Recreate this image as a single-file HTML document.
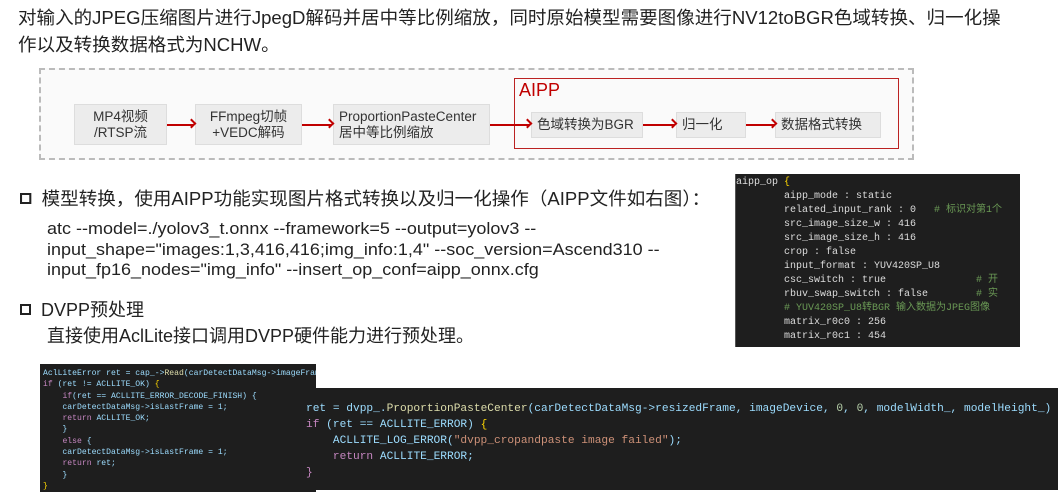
<!DOCTYPE html>
<html><head><meta charset="utf-8"><style>
body{margin:0;width:1058px;height:498px;background:#fff;position:relative;overflow:hidden;font-family:"Liberation Sans","Noto Sans CJK SC",sans-serif;color:#222}
.a{position:absolute;white-space:nowrap}
.box{position:absolute;background:#ececec;border:1px solid #ddd;font-size:13.5px;line-height:16px;color:#333;display:flex;align-items:center;box-sizing:border-box}
.arr{position:absolute;height:2px;background:#c00000}
.arr:after{content:"";position:absolute;right:-1px;top:-4px;width:7px;height:7px;border-top:2px solid #c00000;border-right:2px solid #c00000;transform:rotate(45deg);box-sizing:border-box}
.code{position:absolute;background:#1e1e1e;font-family:"Liberation Mono","Noto Sans CJK SC",monospace;white-space:pre;color:#9cdcfe}
.chk{display:inline-block;width:11px;height:11px;border:2px solid #222;box-sizing:border-box;margin-right:10px;vertical-align:1px}
</style></head><body>
<div class="a" style="left:18px;top:4px;font-size:18px;transform:scaleX(1.03);transform-origin:left">对输入的JPEG压缩图片进行JpegD解码并居中等比例缩放，同时原始模型需要图像进行NV12toBGR色域转换、归一化操</div>
<div class="a" style="left:18px;top:31px;font-size:18px;transform:scaleX(1.03);transform-origin:left">作以及转换数据格式为NCHW。</div>

<div style="position:absolute;left:39px;top:68px;width:875px;height:92px;border:2px dashed #bbb;background:#fafafa;box-sizing:border-box"></div>
<div style="position:absolute;left:514px;top:78px;width:385px;height:71px;border:1.5px solid #b22;box-sizing:border-box"></div>
<div class="a" style="left:519px;top:80px;font-size:18px;color:#c00000">AIPP</div>
<div class="box" style="left:74px;top:104px;width:93px;height:41px;justify-content:center;text-align:center">MP4视频<br>/RTSP流</div>
<div class="box" style="left:195px;top:104px;width:107px;height:41px;justify-content:center;text-align:center">FFmpeg切帧<br>+VEDC解码</div>
<div class="box" style="left:333px;top:104px;width:157px;height:41px;padding-left:5px">ProportionPasteCenter<br>居中等比例缩放</div>
<div class="box" style="left:531px;top:112px;width:112px;height:26px;padding-left:5px">色域转换为BGR</div>
<div class="box" style="left:676px;top:112px;width:70px;height:26px;padding-left:5px">归一化</div>
<div class="box" style="left:775px;top:112px;width:106px;height:26px;padding-left:5px">数据格式转换</div>
<div class="arr" style="left:167px;top:124px;width:27px"></div>
<div class="arr" style="left:302px;top:124px;width:30px"></div>
<div class="arr" style="left:490px;top:124px;width:40px"></div>
<div class="arr" style="left:643px;top:124px;width:32px"></div>
<div class="arr" style="left:746px;top:124px;width:29px"></div>

<div class="a" style="left:20px;top:185px;font-size:18px;transform:scaleX(1.03);transform-origin:left"><span class="chk"></span>模型转换，使用AIPP功能实现图片格式转换以及归一化操作（AIPP文件如右图）：</div>
<div class="a" style="left:47px;top:219px;font-size:16.5px;line-height:20.5px;transform:scaleX(1.09);transform-origin:left">atc --model=./yolov3_t.onnx --framework=5 --output=yolov3 --<br>input_shape="images:1,3,416,416;img_info:1,4" --soc_version=Ascend310 --<br>input_fp16_nodes="img_info" --insert_op_conf=aipp_onnx.cfg</div>
<div class="a" style="left:20px;top:296px;font-size:18px;transform:scaleX(1.0);transform-origin:left"><span class="chk"></span>DVPP预处理</div>
<div class="a" style="left:47px;top:322px;font-size:18px;transform:scaleX(1.0);transform-origin:left">直接使用AclLite接口调用DVPP硬件能力进行预处理。</div>

<div class="code" style="left:735px;top:174px;width:285px;height:173px;font-size:10px;line-height:14px;color:#ddd;padding-top:2px;box-sizing:border-box;border-left:1px solid #555">aipp_op <span style="color:#ffd700">{</span>
        aipp_mode : static
        related_input_rank : 0   <span style="color:#6a9955"># 标识对第1个</span>
        src_image_size_w : 416
        src_image_size_h : 416
        crop : false
        input_format : YUV420SP_U8
        csc_switch : true               <span style="color:#6a9955"># 开</span>
        rbuv_swap_switch : false        <span style="color:#6a9955"># 实</span>
        <span style="color:#6a9955"># YUV420SP_U8转BGR 输入数据为JPEG图像</span>
        matrix_r0c0 : 256
        matrix_r0c1 : 454</div>

<div class="code" style="left:40px;top:364px;width:276px;height:128px;font-size:8.1px;line-height:11.3px;padding:4px 0 0 3px;box-sizing:border-box;overflow:hidden">AclLiteError ret = cap_-><span style="color:#dcdcaa">Read</span>(carDetectDataMsg->imageFrame);
<span style="color:#c586c0">if</span> (ret != ACLLITE_OK) <span style="color:#ffd700">{</span>
    <span style="color:#c586c0">if</span>(ret == ACLLITE_ERROR_DECODE_FINISH) {
    carDetectDataMsg->isLastFrame = 1;
    <span style="color:#c586c0">return</span> ACLLITE_OK;
    }
    <span style="color:#c586c0">else</span> {
    carDetectDataMsg->isLastFrame = 1;
    <span style="color:#c586c0">return</span> ret;
    }
<span style="color:#ffd700">}</span></div>

<div class="code" style="left:300px;top:388px;width:758px;height:102px;font-size:11.2px;line-height:16px;padding:13px 0 0 6px;box-sizing:border-box">ret = dvpp_.<span style="color:#dcdcaa">ProportionPasteCenter</span>(carDetectDataMsg->resizedFrame, imageDevice, <span style="color:#b5cea8">0</span>, <span style="color:#b5cea8">0</span>, modelWidth_, modelHeight_)
<span style="color:#c586c0">if</span> (ret == ACLLITE_ERROR) <span style="color:#ffd700">{</span>
    ACLLITE_LOG_ERROR(<span style="color:#ce9178">"dvpp_cropandpaste image failed"</span>);
    <span style="color:#c586c0">return</span> ACLLITE_ERROR;
<span style="color:#c586c0">}</span></div>
</body></html>
